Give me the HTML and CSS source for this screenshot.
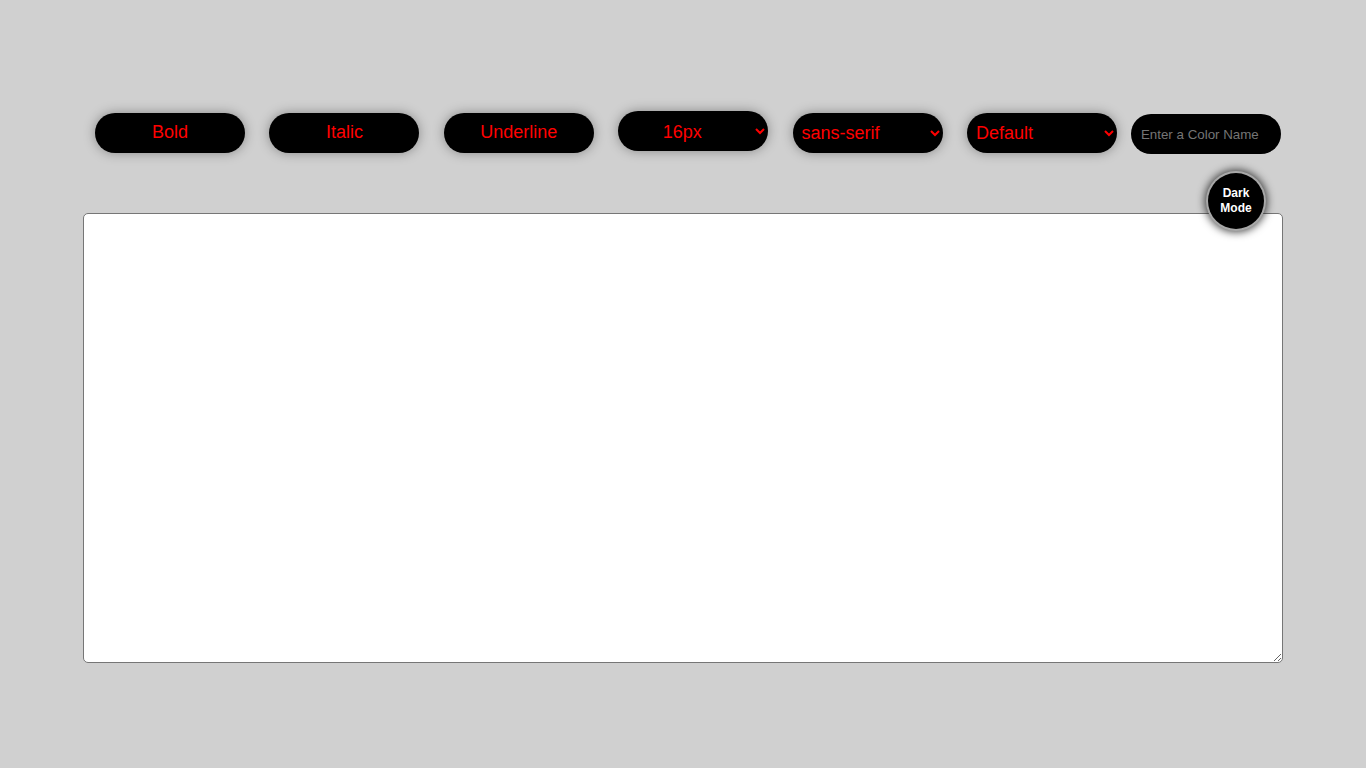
FILE: index.html
```html
<!DOCTYPE html>
<html lang="en">
<head>
<meta charset="utf-8">
<title>Text Editor</title>
<link rel="stylesheet" href="styles.css">
</head>
<body>
<div class="page">
  <div class="toolbar">
    <button class="tool btn">Bold</button>
    <button class="tool btn">Italic</button>
    <button class="tool btn">Underline</button>
    <select class="tool sel sel-size">
      <option>16px</option>
    </select>
    <select class="tool sel sel-left">
      <option>sans-serif</option>
    </select>
    <select class="tool sel sel-left">
      <option>Default</option>
    </select>
    <input class="tool color-input" type="text" placeholder="Enter a Color Name">
  </div>
  <div class="editor-wrap">
    <button class="dark-toggle">Dark<br>Mode</button>
    <textarea class="editor"></textarea>
  </div>
</div>
</body>
</html>
```
FILE: styles.css
```css
html, body {
  margin: 0;
  padding: 0;
}
body {
  background: #d0d0d0;
  font-family: "Liberation Sans", Arial, sans-serif;
  width: 1366px;
  height: 768px;
  overflow: hidden;
}
.page {
  display: flex;
  flex-direction: column;
  align-items: center;
  padding-top: 111px;
}
.toolbar {
  display: flex;
  align-items: flex-start;
  column-gap: 24.4px;
  width: 1186px;
  margin-left: 10px;
}
.tool {
  box-sizing: border-box;
  width: 150px;
  height: 40px;
  border: none;
  border-radius: 20px;
  background: #000;
  color: #ff0000;
  font-family: "Liberation Sans", Arial, sans-serif;
  font-size: 18px;
  box-shadow: 0 0 12px rgba(0, 0, 0, 0.35);
  margin-top: 2px;
  outline: none;
}
.btn {
  padding: 0 0 2px 0;
  text-align: center;
  cursor: pointer;
}
.sel {
  padding: 0 6px 0 5px;
  color: #ff0000;
}
.sel-size {
  margin-top: 0;
  text-align: center;
  text-align-last: center;
  padding: 2px 10px 0 0;
}
.color-input {
  margin-left: -10.4px;
  margin-top: 3px;
  padding: 0 10px;
  font-size: 13.333px;
  color: #ff0000;
  box-shadow: none;
}
.color-input::placeholder {
  color: #757575;
}
.editor-wrap {
  position: relative;
  margin-top: 59px;
  width: 1200px;
  height: 450px;
}
.editor {
  box-sizing: border-box;
  display: block;
  width: 1200px;
  height: 450px;
  border: 1px solid #767676;
  border-radius: 5px;
  background: #fff;
  margin: 0;
  padding: 2px;
  outline: none;
}
.dark-toggle {
  position: absolute;
  top: -40px;
  left: 1125px;
  z-index: 2;
  width: 56px;
  height: 56px;
  border-radius: 50%;
  border: none;
  padding: 0;
  background: #000;
  color: #fff;
  font-family: "Liberation Sans", Arial, sans-serif;
  font-size: 12px;
  font-weight: bold;
  line-height: 15px;
  box-shadow: 0 0 0 2px #a8a8a8, 0 0 8px 3px rgba(0, 0, 0, 0.75);
  cursor: pointer;
}
```
